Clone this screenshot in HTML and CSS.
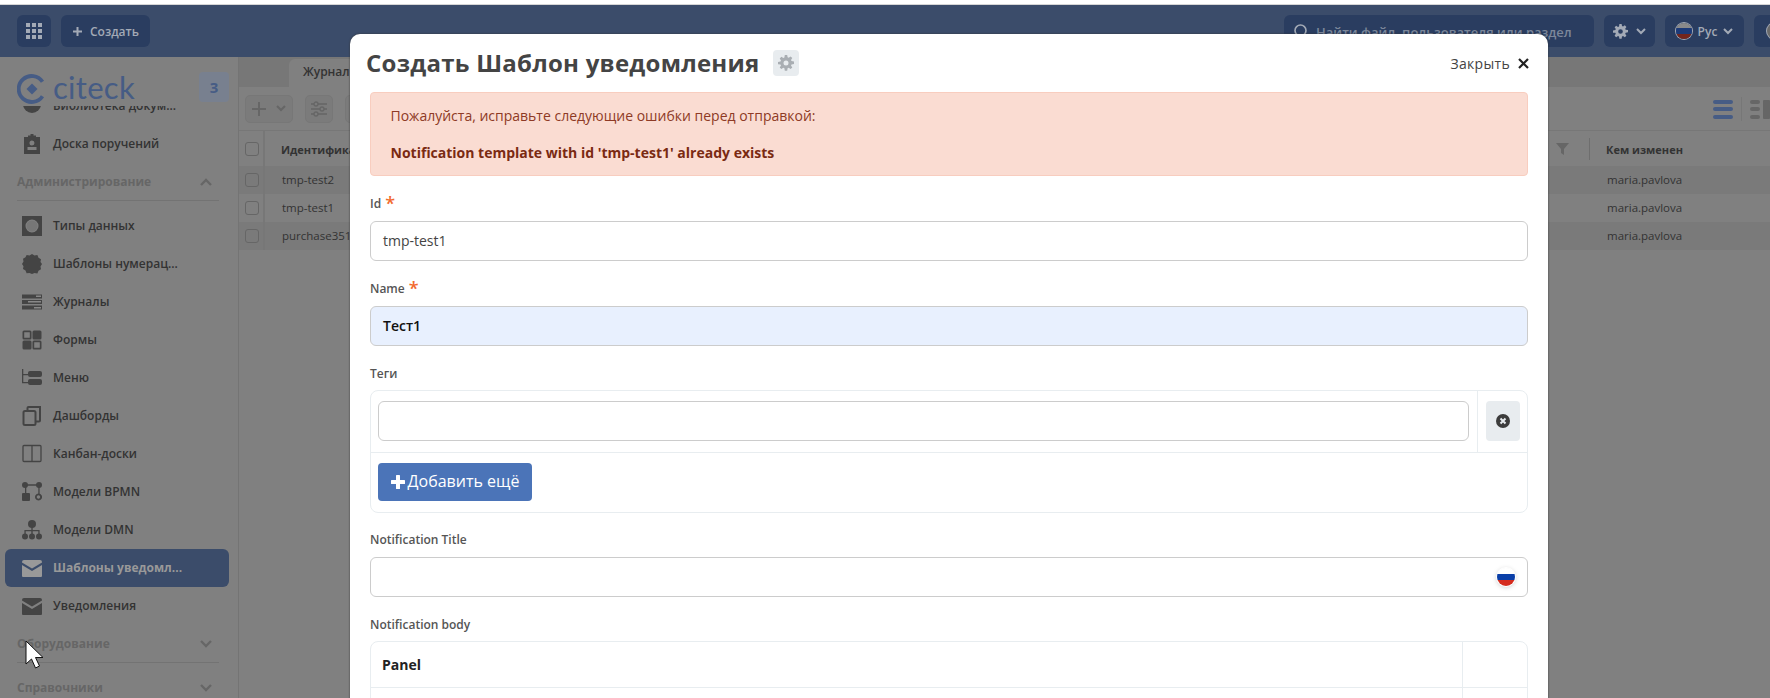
FILE: index.html
```html
<!DOCTYPE html>
<html lang="ru">
<head>
<meta charset="utf-8">
<title>Создать Шаблон уведомления</title>
<link rel="stylesheet" href="styles.css">
</head>
<body>
<div class="strip"></div>
<div class="app">
  <header class="topbar">
    <button class="hbtn apps"><svg width="16" height="16" viewBox="0 0 16 16" fill="#a3aab6"><rect width="4" height="4"/><rect x="6" width="4" height="4"/><rect x="12" width="4" height="4"/><rect y="6" width="4" height="4"/><rect x="6" y="6" width="4" height="4"/><rect x="12" y="6" width="4" height="4"/><rect y="12" width="4" height="4"/><rect x="6" y="12" width="4" height="4"/><rect x="12" y="12" width="4" height="4"/></svg></button>
    <button class="hbtn create"><svg width="9" height="9" viewBox="0 0 9 9" fill="#a3aab6"><rect x="3.500" width="2" height="9"/><rect y="3.500" width="9" height="2"/></svg><span>Создать</span></button>
    <div class="search"><svg width="14" height="14" viewBox="0 0 14 14" fill="none" stroke="#a3aab6" stroke-width="1.600"><circle cx="6.500" cy="6.500" r="5.500"/><path d="M10 10l3 3"/></svg><span>Найти файл, пользователя или раздел</span></div>
    <button class="hbtn settings"><svg width="15" height="15" viewBox="0 0 16 16"><use href="#gear" fill="#a3aab6"/></svg><svg class="chev" width="10" height="7" viewBox="0 0 10 7" fill="none" stroke="#a3aab6" stroke-width="2"><path d="M1 1l4 4 4-4"/></svg></button>
    <button class="hbtn lang"><span class="hflag"></span><span>Рус</span><svg class="chev" width="10" height="7" viewBox="0 0 10 7" fill="none" stroke="#a3aab6" stroke-width="2"><path d="M1 1l4 4 4-4"/></svg></button>
    <button class="hbtn user"><span class="avatar"></span></button>
  </header>

  <div class="main">
    <aside class="sidebar">
      <div class="brand">
        <svg class="logo" width="30" height="30" viewBox="0 0 30 30" fill="none"><path d="M25.500 7.800A13 13 0 1 0 25.500 22.200" stroke="#465c85" stroke-width="3.800"/><path d="M15 9.500l5.500 5.500-5.500 5.500-5.500-5.500z" fill="#465c85"/></svg>
        <span class="wordmark">citeck</span>
        <span class="count">3</span>
      </div>
      <nav class="menu">
        <a class="item first"><svg viewBox="0 0 20 20"><circle cx="10" cy="8" r="9" fill="#444"/></svg><span>Библиотека докум...</span></a>
        <a class="item"><svg viewBox="0 0 20 20" fill="#444"><path d="M2 3h4V1.500h2.500V0h3v1.500H14V3h4v17H2zM10 6.500a2.500 2.500 0 1 0 0 5 2.500 2.500 0 0 0 0-5zM5.500 13v3h9v-3z" fill-rule="evenodd"/></svg><span>Доска поручений</span></a>
        <div class="section"><span>Администрирование</span><svg class="schev" width="12" height="8" viewBox="0 0 12 8" fill="none" stroke="#666" stroke-width="2.400"><path d="M1 7l5-5 5 5"/></svg></div>
        <a class="item"><svg viewBox="0 0 20 20" fill="#444"><path d="M0 0h20v20H0zM10 3.500a6.500 6.500 0 1 0 0 13 6.500 6.500 0 0 0 0-13z" fill-rule="evenodd"/><circle cx="10" cy="10" r="5.500" fill="#777"/></svg><span>Типы данных</span></a>
        <a class="item"><svg viewBox="0 0 20 20" fill="#444"><path d="M10 0l2.500 1.400 2.900-.4 1.100 2.700 2.500 1.500-.5 2.900L20 10l-1.500 2.400.5 2.900-2.500 1.500-1.100 2.700-2.900-.4L10 20l-2.500-1.100-2.900.4-1.100-2.700-2.500-1.500.5-2.900L0 10l1.500-2.400-.5-2.900 2.500-1.500L4.600 1l2.900.4z"/></svg><span>Шаблоны нумерац...</span></a>
        <a class="item"><svg viewBox="0 0 20 20" fill="#444"><path d="M0 2.500h20v4H0zM0 8h20v4H0zM0 13.500h20v4H0z"/><path d="M14 3.500h5v1.500h-5zM6 9h13v1.500H6zM12 15h7v1.500h-7z" fill="#888"/></svg><span>Журналы</span></a>
        <a class="item"><svg viewBox="0 0 20 20" fill="#444"><path d="M2 .5h6a1.500 1.500 0 0 1 1.500 1.500v6A1.500 1.500 0 0 1 8 9.500H2A1.500 1.500 0 0 1 .5 8V2A1.500 1.500 0 0 1 2 .5zM2.200 2.200v5.600h5.600V2.200z" fill-rule="evenodd"/><rect x="10.500" y=".5" width="9" height="9" rx="1.500"/><rect x=".5" y="10.500" width="9" height="9" rx="1.500"/><path d="M12 10.500h6a1.500 1.500 0 0 1 1.500 1.500v6a1.500 1.500 0 0 1-1.500 1.500h-6a1.500 1.500 0 0 1-1.500-1.500v-6a1.500 1.500 0 0 1 1.500-1.500zM12.200 12.200v5.600h5.600v-5.600z" fill-rule="evenodd"/></svg><span>Формы</span></a>
        <a class="item"><svg viewBox="0 0 20 20" fill="#444"><rect x="6" y="3" width="14" height="6" rx="2"/><rect x="6" y="11" width="14" height="6" rx="2"/><path d="M0 1h1.300v5H6v1.300H1.300V14H6v1.300H0z"/></svg><span>Меню</span></a>
        <a class="item"><svg viewBox="0 0 20 20" fill="none" stroke="#444" stroke-width="2"><rect x="1.500" y="5" width="12" height="14" rx="1.500"/><path d="M5.500 5V2a1 1 0 0 1 1-1H18v13.500a1 1 0 0 1-1 1h-3.500"/></svg><span>Дашборды</span></a>
        <a class="item"><svg viewBox="0 0 20 20" fill="none" stroke="#444" stroke-width="1.300"><rect x="1" y="1.500" width="18" height="16" rx="1"/><path d="M10 1.500v16"/></svg><span>Канбан-доски</span></a>
        <a class="item"><svg viewBox="0 0 20 20" fill="#444"><rect y="11" width="8" height="8" rx="1"/><circle cx="3" cy="3" r="3"/><circle cx="17" cy="3" r="3"/><path d="M3 2.300h14v1.400H3zM3 3h1.300v9H3zM16.300 3h1.300v9h-1.300z"/><path d="M16.500 11.500a3.500 3.500 0 1 0 .1 0zM16.500 13.300a1.700 1.700 0 1 1-.1 0z" fill-rule="evenodd"/></svg><span>Модели BPMN</span></a>
        <a class="item"><svg viewBox="0 0 20 20" fill="#444"><circle cx="10" cy="4" r="4"/><circle cx="3" cy="16.500" r="3"/><circle cx="10" cy="16.500" r="3"/><circle cx="17" cy="16.500" r="3"/><path d="M9.300 6h1.400v4h6.900v4h-1.300v-2.700h-5.600V14H9.300v-2.700H3.700V14H2.400v-4h6.900z"/></svg><span>Модели DMN</span></a>
        <a class="item active"><svg viewBox="0 0 20 20" fill="#999"><path d="M2 2h16a2 2 0 0 1 2 2v.5l-10 6-10-6V4a2 2 0 0 1 2-2zM0 7l10 6 10-6v11a1 1 0 0 1-1 1H1a1 1 0 0 1-1-1z"/></svg><span>Шаблоны уведомл...</span></a>
        <a class="item"><svg viewBox="0 0 20 20" fill="#444"><path d="M2 2h16a2 2 0 0 1 2 2v.5l-10 6-10-6V4a2 2 0 0 1 2-2zM0 7l10 6 10-6v11a1 1 0 0 1-1 1H1a1 1 0 0 1-1-1z"/></svg><span>Уведомления</span></a>
        <div class="section"><span>Оборудование</span><svg class="schev" width="12" height="8" viewBox="0 0 12 8" fill="none" stroke="#666" stroke-width="2.400"><path d="M1 1l5 5 5-5"/></svg></div>
        <div class="section"><span>Справочники</span><svg class="schev" width="12" height="8" viewBox="0 0 12 8" fill="none" stroke="#666" stroke-width="2.400"><path d="M1 1l5 5 5-5"/></svg></div>
      </nav>
    </aside>

    <section class="content">
      <div class="tabs"><div class="tab">Журналы</div></div>
      <div class="toolbar">
        <button class="tbtn add"><svg width="24" height="16" viewBox="0 0 24 16" fill="#666"><rect x="0" y="7" width="14" height="2"/><rect x="6" y="1" width="2" height="14"/></svg><svg width="10" height="7" viewBox="0 0 10 7" fill="none" stroke="#666" stroke-width="2"><path d="M1 1l4 4 4-4"/></svg></button>
        <button class="tbtn filt"><svg width="16" height="16" viewBox="0 0 16 16" fill="none" stroke="#666" stroke-width="1.300"><path d="M0 3h16M0 8h16M0 13h16"/><circle cx="5" cy="3" r="2" fill="#7b7b7b"/><circle cx="11" cy="8" r="2" fill="#7b7b7b"/><circle cx="5" cy="13" r="2" fill="#7b7b7b"/></svg></button>
        <button class="tbtn filt"></button>
        <div class="views">
          <svg width="20" height="20" viewBox="0 0 20 20" fill="#465c85"><rect y="1" width="20" height="4" rx="2"/><rect y="8" width="20" height="4" rx="2"/><rect y="16" width="20" height="4" rx="2"/></svg>
          <i class="vdiv"></i>
          <svg width="20" height="20" viewBox="0 0 20 20" fill="#666"><rect y="1" width="10" height="4" rx="2"/><rect y="8" width="10" height="4" rx="2"/><rect y="16" width="10" height="4" rx="2"/><rect x="13" y="1" width="7" height="19" rx="1"/></svg>
        </div>
      </div>
      <div class="table">
        <div class="row head"><span class="ccell"><i class="cb"></i></span><span class="cname">Идентификатор</span><svg class="funnel" width="13" height="12" viewBox="0 0 13 12" fill="#666"><path d="M0 0h13L8 6v6L5 10V6z"/></svg><i class="hdiv"></i><span class="cuser">Кем изменен</span></div>
        <div class="row odd"><span class="ccell"><i class="cb"></i></span><span class="cname">tmp-test2</span><span class="cuser">maria.pavlova</span></div>
        <div class="row"><span class="ccell"><i class="cb"></i></span><span class="cname">tmp-test1</span><span class="cuser">maria.pavlova</span></div>
        <div class="row odd"><span class="ccell"><i class="cb"></i></span><span class="cname">purchase351</span><span class="cuser">maria.pavlova</span></div>
      </div>
    </section>
  </div>

  <div class="modal">
    <div class="mhead">
      <h1>Создать Шаблон уведомления</h1>
      <span class="gearbtn"><svg width="16" height="16" viewBox="0 0 16 16"><use href="#gear" fill="#a9aeb3"/></svg></span>
      <span class="close">Закрыть <svg width="11" height="11" viewBox="0 0 11 11" stroke="#222" stroke-width="2.200" fill="none"><path d="M1 1l9 9M10 1l-9 9"/></svg></span>
    </div>
    <div class="mbody">
      <div class="alert">
        <p>Пожалуйста, исправьте следующие ошибки перед отправкой:</p>
        <p class="strong">Notification template with id 'tmp-test1' already exists</p>
      </div>
      <div class="field">
        <label>Id <b class="req">*</b></label>
        <div class="input">tmp-test1</div>
      </div>
      <div class="field">
        <label>Name <b class="req">*</b></label>
        <div class="input auto">Тест1</div>
      </div>
      <div class="field">
        <label>Теги</label>
        <div class="panel">
          <div class="prow">
            <div class="pcell grow"><div class="input"></div></div>
            <div class="pcell side"><span class="clear"><svg width="14" height="14" viewBox="0 0 14 14"><circle cx="7" cy="7" r="7" fill="#3c3c3c"/><path d="M4.500 4.500l5 5M9.500 4.500l-5 5" stroke="#e8ecef" stroke-width="2"/></svg></span></div>
          </div>
          <div class="pfoot"><button class="addmore"><svg width="14" height="14" viewBox="0 0 14 14" fill="#fff"><rect x="5" width="4" height="14" rx=".5"/><rect y="5" width="14" height="4" rx=".5"/></svg><span>Добавить ещё</span></button></div>
        </div>
      </div>
      <div class="field">
        <label>Notification Title</label>
        <div class="input withflag"><span class="flag"></span></div>
      </div>
      <div class="field">
        <label>Notification body</label>
        <div class="panel">
          <div class="prow phead"><div class="ptitle">Panel</div><div class="pgap"></div></div>
          <div class="prow pnext"><div class="ptitle"></div><div class="pgap"></div></div>
        </div>
      </div>
    </div>
  </div>

  <svg class="cursor" width="19" height="29" viewBox="0 0 19 29"><path d="M1 1v23l5.500-5 4 9 4-2-4-8.500H18z" fill="#fff" stroke="#111" stroke-width="1"/></svg>
</div>
<svg class="defs" width="0" height="0"><defs><path id="gear" fill-rule="evenodd" d="M6.800 0h2.400l.4 2.200 1.100.5 1.900-1.300 1.700 1.700-1.300 1.900.5 1.100 2.500.4v2.400l-2.500.5-.5 1.100 1.300 1.900-1.700 1.700-1.900-1.300-1.100.5-.4 2.400H6.800l-.4-2.400-1.100-.5-1.900 1.300-1.700-1.700 1.300-1.900-.5-1.100L0 9.300V6.900l2.500-.4.500-1.100-1.300-1.900 1.700-1.700 1.900 1.300 1.100-.5zM8 5.500a2.500 2.500 0 1 0 0 5 2.500 2.500 0 0 0 0-5z"/></defs></svg>
</body>
</html>
```
FILE: styles.css
```css
* { box-sizing: border-box; }
html, body { margin: 0; height: 100%; overflow: hidden; background: #fff; }
body { font-family: "Open Sans", "Liberation Sans", sans-serif; font-size: 13px; color: #333; }
button { font: inherit; border: 0; padding: 0; }
.strip { height: 5px; background: #fff; border-top: 3px solid #fff; border-bottom: 1px solid #d6d6d6; }
.app { position: relative; height: 693px; background: #808080; overflow: hidden; }
.defs { position: absolute; }

.topbar { height: 52px; background: #3b4c6a; display: flex; align-items: center; padding: 0 0 0 17px; }
.hbtn { height: 32px; background: #2a3d60; border-radius: 6px; display: flex; align-items: center; justify-content: center; color: #a3aab6; font-weight: 600; font-size: 12px; flex: none; }
.apps { width: 34px; }
.create { width: 89px; margin-left: 10px; gap: 8px; justify-content: flex-start; padding-left: 12px; }
.search { width: 310px; height: 32px; margin-left: auto; background: #2a3d60; border-radius: 6px; display: flex; align-items: center; gap: 8px; padding-left: 10px; color: #7c879a; font-size: 13px; font-weight: 600; }
.search span { padding-top: 2px; }
.settings { width: 51px; margin-left: 10px; gap: 8px; }
.lang { width: 79px; margin-left: 10px; gap: 6px; }
.user { width: 16px; margin-left: 10px; justify-content: flex-start; padding-left: 13px; border-radius: 6px 0 0 6px; }
.hflag { width: 16px; height: 16px; border-radius: 50%; background: linear-gradient(#8a8a8a 0 33%, #1c3a78 33% 66%, #74251c 66%); box-shadow: 0 0 0 1px #a3aab6; }
.avatar { width: 12px; height: 16px; border-radius: 8px 0 0 8px; background: #6a6a6a; box-shadow: 0 0 0 1px #a3aab6; flex: none; }

.main { display: flex; height: 641px; }
.sidebar { width: 239px; flex: none; border-right: 1px solid #747474; overflow: hidden; display: flex; flex-direction: column; }
.brand { height: 49px; flex: none; display: flex; align-items: center; padding: 15px 9px 0 17px; }
.logo { flex: none; }
.wordmark { margin: -4px 0 0 6px; font-family: "Lato", sans-serif; font-size: 31px; line-height: 30px; color: #465c85; letter-spacing: .3px; }
.count { margin: -4px 0 0 auto; width: 30px; height: 30px; border-radius: 4px; background: #78808f; color: #465c85; font-weight: 700; font-size: 15px; display: flex; align-items: center; justify-content: center; }
.menu { flex: 1; overflow: hidden; }
.item { height: 38px; margin: 0 9px 0 5px; padding-left: 17px; display: flex; align-items: center; gap: 11px; color: #333; font-size: 12px; font-weight: 600; border-radius: 6px; white-space: nowrap; }
.item span { padding-bottom: 1px; }
.item svg { width: 20px; height: 20px; flex: none; }
.item.first { margin-top: -19px; }
.item.active { background: #3b4c6a; color: #999; font-weight: 700; }
.section { height: 38px; margin: 0 19px 6px 17px; border-bottom: 1px solid #737373; display: flex; align-items: center; justify-content: space-between; padding: 0 7px 0 0; color: #666; font-weight: 700; font-size: 12px; }

.content { flex: 1; min-width: 0; }
.tabs { height: 30px; background: #777; padding: 2px 0 0 50px; }
.tab { width: 140px; height: 28px; background: #808080; border-radius: 6px 0 0 0; padding: 0 0 0 14px; line-height: 26px; font-size: 12px; font-weight: 600; color: #333; }
.toolbar { height: 44px; border-bottom: 1px solid #777; display: flex; align-items: center; gap: 12px; padding-left: 6px; }
.tbtn { height: 28px; border-radius: 5px; background: #7b7b7b; border: 1px solid #777; display: flex; align-items: center; justify-content: center; flex: none; }
.add { width: 48px; }
.filt { width: 28px; }
.views { margin-left: auto; display: flex; align-items: center; gap: 8px; }
.vdiv { width: 1px; height: 24px; background: #777; }
.row { height: 28px; display: flex; align-items: center; font-size: 12px; color: #333; background: #808080; }
.row.odd { background: #7a7a7a; }
.row.head { height: 35px; font-weight: 700; }
.ccell { width: 26px; align-self: stretch; border-right: 2px solid #777; display: flex; align-items: center; padding-left: 6px; flex: none; }
.cb { width: 14px; height: 14px; border: 1.500px solid #666; border-radius: 3px; display: block; }
.cname { flex: 1; padding: 0 0 1px 17px; white-space: nowrap; font-size: 11.500px; }
.head .cname { font-size: 11px; padding: 1px 0 0 16px; }
.cuser { width: 164px; flex: none; padding: 0 0 1px 1px; font-size: 11.500px; }
.head .cuser { font-size: 11px; padding: 1px 0 0; }
.funnel { flex: none; margin-right: 20px; }
.hdiv { width: 1px; height: 22px; background: #6e6e6e; margin-right: 16px; flex: none; }

.modal { position: absolute; left: 350px; top: 29px; width: 1198px; height: 680px; background: #fff; border-radius: 10px 10px 0 0; box-shadow: 0 0 2px #333; overflow: hidden; }
.mhead { height: 58px; display: flex; align-items: center; padding: 0 19px 0 16px; }
h1 { margin: 0; font-size: 24px; line-height: 1; font-weight: 700; color: #444; letter-spacing: .25px; }
.gearbtn { width: 26px; height: 26px; margin-left: 14px; background: #e8ecef; border-radius: 4px; display: flex; align-items: center; justify-content: center; }
.close { margin-left: auto; display: flex; align-items: center; gap: 8px; font-size: 14px; letter-spacing: .3px; color: #444; }
.mbody { padding: 0 20px; }
.alert { height: 84px; background: #fadcd2; border: 1px solid #f8cdbf; border-radius: 4px; padding: 13px 0 0 19.500px; color: #8e3a25; font-size: 14px; line-height: 20px; }
.alert p { margin: 0; }
.alert .strong { margin-top: 17px; font-weight: 700; color: #7a2a12; }
.field { margin-top: 18px; }
label { display: block; height: 18px; line-height: 18px; padding-top: 1px; margin-bottom: 9px; font-size: 12px; font-weight: 600; color: #555; }
.req { color: #f26a2e; font-size: 18px; font-weight: 600; line-height: 14px; margin-left: 1px; vertical-align: -2px; }
.input { height: 40px; border: 1.500px solid #ccc; border-radius: 6px; padding-left: 12px; font-size: 14px; line-height: 38px; color: #444; background: #fff; }
.input.auto { background: #e8f0fe; color: #111; font-weight: 600; }
.withflag { display: flex; align-items: center; justify-content: flex-end; padding-right: 12px; }
.flag { width: 18px; height: 18px; border-radius: 50%; background: linear-gradient(#fff 0 33%, #0a3fa8 33% 66%, #d52b1e 66%); box-shadow: 0 0 0 1px #fff, 0 1px 5px rgba(0,0,0,.25); }
.panel { border: 1px solid #e8edf0; border-radius: 8px; margin: -1px 0; }
.prow { display: flex; }
.pcell { padding: 10px 8px 11px 7px; border-bottom: 1px solid #e8edf0; }
.grow { flex: 1; }
.side { width: 50px; flex: none; border-left: 1px solid #e8edf0; padding: 10px 8px 11px; }
.clear { display: flex; width: 34px; height: 40px; background: #e8ecef; border-radius: 4px; align-items: center; justify-content: center; }
.pfoot { padding: 10px 7px; height: 59px; }
.addmore { width: 154px; height: 38px; background: #4b74b8; border-radius: 4px; color: #fff; font-size: 16px; display: flex; align-items: center; justify-content: center; gap: 3px; }
.addmore span { padding-bottom: 2px; }
.ptitle { flex: 1; padding-left: 11px; font-size: 14px; font-weight: 700; color: #222; line-height: 45px; height: 45px; }
.pgap { width: 65px; flex: none; border-left: 1px solid #e8edf0; }
.phead { border-bottom: 1px solid #e8edf0; }
.pnext { height: 60px; }

.cursor { position: absolute; left: 25px; top: 635px; }
```
